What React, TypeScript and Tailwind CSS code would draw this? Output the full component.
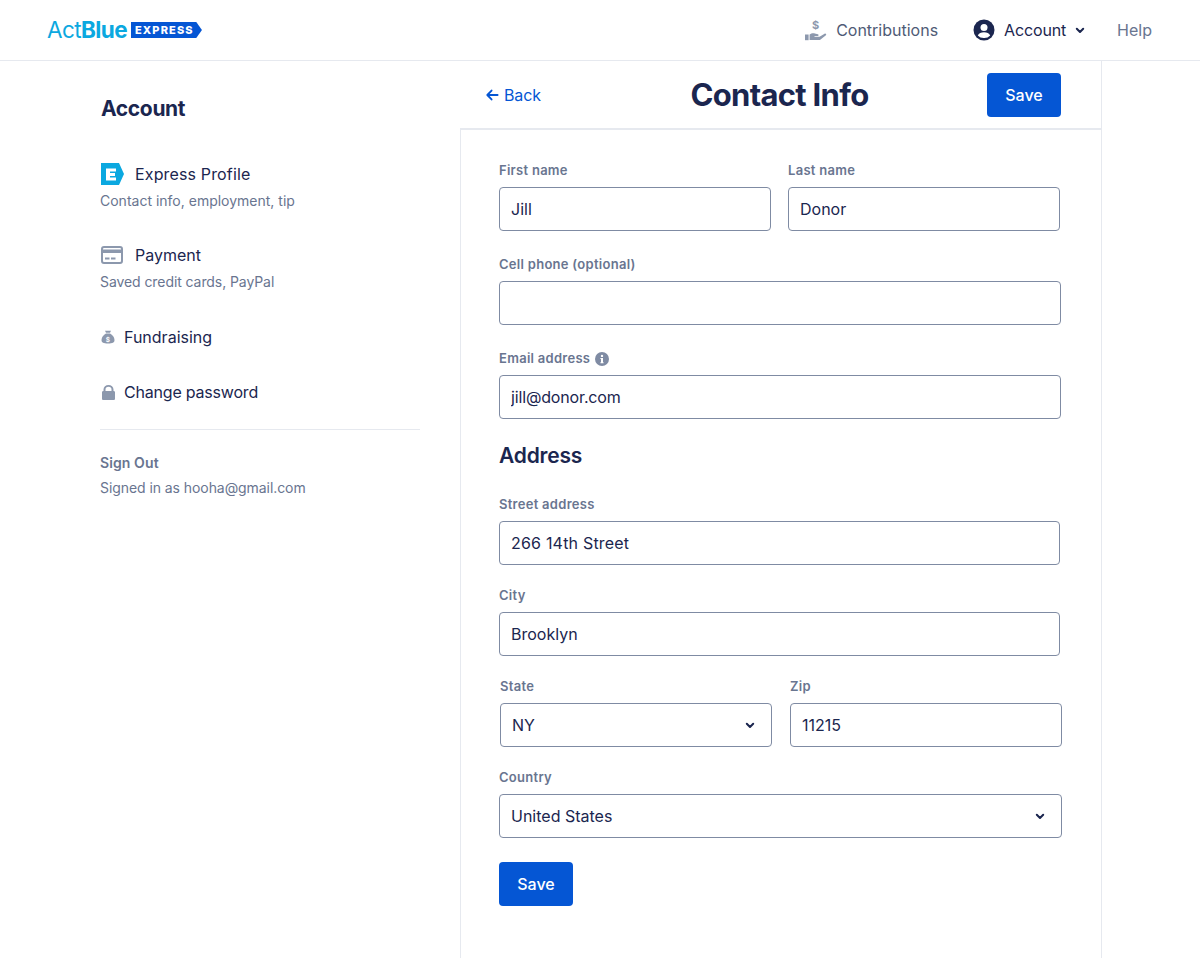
import React from "react";

const Chevron = ({ className = "" }: { className?: string }) => (
  <svg viewBox="0 0 10 7" className={className} fill="none" stroke="currentColor" strokeWidth="2" strokeLinecap="round" strokeLinejoin="round">
    <path d="M1.800 1.800 5 5l3.200-3.200" />
  </svg>
);

const Label = ({ children, className = "" }: { children: React.ReactNode; className?: string }) => (
  <div className={`h-[17px] mb-[8px] text-[13px] leading-[17px] font-semibold tracking-[0.28px] text-[#697590] ${className}`}>{children}</div>
);

const inputCls =
  "block w-full h-[44px] rounded-[4px] border border-[#7f8ba3] bg-white px-[11px] text-[16px] text-[#1b264f] outline-none";

const Field = ({ label, value = "", className = "", inputClass = "" }: { label: React.ReactNode; value?: string; className?: string; inputClass?: string }) => (
  <div className={className}>
    <Label>{label}</Label>
    <input readOnly value={value} className={`${inputCls} ${inputClass}`} />
  </div>
);

const SelectField = ({ label, value, className = "" }: { label: string; value: string; className?: string }) => (
  <div className={className}>
    <Label>{label}</Label>
    <div className="relative">
      <div className={`${inputCls} flex items-center`}>{value}</div>
      <Chevron className="absolute right-[17px] top-[19px] w-[10px] h-[7px] text-[#1b264f]" />
    </div>
  </div>
);

const SaveButton = ({ className = "" }: { className?: string }) => (
  <button className={`h-[44px] w-[74px] rounded-[4px] bg-[#0556d4] text-white text-[16px] font-medium ${className}`}>Save</button>
);

export default function App() {
  return (
    <div className="min-h-[958px] bg-white font-['Inter',sans-serif] text-[#1b264f] overflow-hidden">
      <header className="h-[61px] border-b border-[#e6e9ef] flex items-center justify-between pl-[47px] pr-[48px]">
        <div className="flex items-center">
          <span className="text-[22.500px] leading-[24px] tracking-[-0.6px] text-[#0ba8e0] font-normal">Act</span>
          <span className="text-[22.500px] leading-[24px] tracking-[-0.6px] text-[#0ba8e0] font-bold">Blue</span>
          <span className="ml-[4px] w-[71px] h-[16px] bg-[#0556d4] text-white text-[11px] leading-[16px] font-extrabold tracking-[1.15px] pl-[4px] [clip-path:polygon(0_0,92%_0,100%_50%,92%_100%,0_100%)]">
            EXPRESS
          </span>
        </div>
        <nav className="flex items-center text-[16px]">
          <svg viewBox="0 0 22 22" className="w-[22px] h-[22px] text-[#8c98ad]" fill="currentColor">
            <path d="M0 15.500h3.600v5.700H0z" />
            <path d="M4.600 15.600c1.500-1.200 3.400-1.700 5.200-1.200l3.200.8c.9.3.8 1.700-.3 1.700H9.500v.8h5l5.100-3c1-.5 2.200.7 1.300 1.600l-5.300 4.200c-.5.4-1 .6-1.700.6H4.600z" />
            <text x="10.500" y="10" fontSize="11" fontWeight="700" textAnchor="middle" fontFamily="Inter, sans-serif">$</text>
          </svg>
          <span className="ml-[9px] text-[#4f5b76]">Contributions</span>
          <svg viewBox="0 0 22 22" className="ml-[35px] w-[22px] h-[22px] text-[#1b264f]">
            <circle cx="11" cy="11" r="10.500" fill="currentColor" />
            <circle cx="11" cy="8.400" r="3.500" fill="#fff" />
            <path d="M4.800 16.400c1-2.200 3.300-3.200 6.200-3.200s5.200 1 6.200 3.200A8 8 0 0 1 11 19a8 8 0 0 1-6.200-2.600z" fill="#fff" />
          </svg>
          <span className="ml-[9px] w-[64px] tracking-[-0.15px] text-[#1b264f]">Account</span>
          <Chevron className="ml-[7px] w-[10px] h-[7px] text-[#1b264f]" />
          <span className="ml-[32px] text-[#697590]">Help</span>
        </nav>
      </header>

      <div className="flex">
        <aside className="ml-[100px] w-[320px] shrink-0">
          <h2 className="mt-[36px] ml-[1px] text-[21px] leading-[24px] font-bold tracking-[-0.35px]">Account</h2>

          <div className="mt-[41px] flex items-center h-[24px]">
            <svg viewBox="0 0 24 22" className="ml-[1px] w-[24px] h-[22px]">
              <path d="M0 0h18l5 11-5 11H0z" fill="#0ba8e0" />
              <path d="M5 5.500h10v3H9V10h5v3H9v1.500h6v3H5z" fill="#fff" />
            </svg>
            <span className="ml-[10px] text-[16px] tracking-[0.15px]">Express Profile</span>
          </div>
          <p className="mt-[6px] text-[14px] leading-[18px] text-[#697590]">Contact info, employment, tip</p>

          <div className="mt-[33px] flex items-center h-[24px]">
            <svg viewBox="0 0 22 18" className="ml-[1px] w-[22px] h-[18px]" fill="none">
              <rect x="1" y="1" width="20" height="16" rx="2" stroke="#8c98ad" strokeWidth="2" />
              <rect x="1" y="3.500" width="20" height="3.500" fill="#8c98ad" />
              <rect x="4" y="11.500" width="4.500" height="2" fill="#8c98ad" />
              <rect x="10" y="11.500" width="4.500" height="2" fill="#8c98ad" />
            </svg>
            <span className="ml-[12px] text-[16px]">Payment</span>
          </div>
          <p className="mt-[6px] text-[14px] leading-[18px] tracking-[-0.08px] text-[#697590]">Saved credit cards, PayPal</p>

          <div className="mt-[34px] flex items-center h-[24px]">
            <svg viewBox="0 0 14 14" className="ml-[1px] w-[14px] h-[14px]" fill="#8c98ad">
              <path d="M4 .8h6l-1 2H5z" />
              <path d="M5 3.600h4c2.500 1.500 4.500 4 4.500 6.400 0 2.600-2 3.500-6.500 3.500S.5 12.600.5 10C.5 7.600 2.500 5.100 5 3.600z" />
              <text x="7" y="11.500" fontSize="6.500" fontWeight="700" textAnchor="middle" fill="#fff" fontFamily="Inter, sans-serif">$</text>
            </svg>
            <span className="ml-[9px] text-[16px]">Fundraising</span>
          </div>

          <div className="mt-[31px] flex items-center h-[24px]">
            <svg viewBox="0 0 13 15" className="ml-[2px] w-[13px] h-[15px]" fill="#8c98ad">
              <path d="M1.500 6V4.500a5 4.500 0 0 1 10 0V6h.2c.7 0 1.300.6 1.300 1.300v6.400c0 .7-.6 1.300-1.300 1.300H1.300C.6 15 0 14.400 0 13.700V7.300C0 6.600.6 6 1.300 6zm2 0h6V4.500a3 2.700 0 0 0-6 0z" />
            </svg>
            <span className="ml-[9px] text-[16px] tracking-[-0.2px]">Change password</span>
          </div>

          <div className="mt-[25px] h-px bg-[#e6e9ef]" />
          <div className="mt-[24px] text-[14px] leading-[18px] font-semibold tracking-[0.1px] text-[#697590]">Sign Out</div>
          <p className="mt-[7px] text-[14px] leading-[18px] tracking-[-0.07px] text-[#697590]">Signed in as hooha@gmail.com</p>
        </aside>

        <main className="ml-[40px] w-[642px] shrink-0 min-h-[897px] border-r border-[#e6e9ef]">
          <div className="relative h-[69px] border-b-2 border-[#e6e9ef] flex items-center justify-between pl-[26px] pr-[40px]">
            <div className="flex items-center text-[16px] text-[#0556d4] mt-[1px]">
              <svg viewBox="0 0 14 12" className="w-[13px] h-[12px]" fill="none" stroke="currentColor" strokeWidth="2" strokeLinecap="round" strokeLinejoin="round">
                <path d="M6 1.200 1.400 6 6 10.800M2 6h10.500" />
              </svg>
              <span className="ml-[5px] tracking-[-0.1px]">Back</span>
            </div>
            <h1 className="absolute left-0 right-[2px] top-[14px] text-center text-[31px] leading-[40px] font-bold tracking-[-0.7px]">Contact Info</h1>
            <SaveButton className="relative mt-[1px]" />
          </div>

          <div className="border-l border-[#e6e9ef] pl-[38px] pr-[30px] pt-[32px] min-h-[828px]">
            <div className="flex gap-[17px]">
              <Field label="First name" value="Jill" className="w-[272px] shrink-0" />
              <Field label="Last name" value="Donor" className="w-[272px] shrink-0" />
            </div>
            <Field label="Cell phone (optional)" className="mt-[25px] w-[562px]" />
            <Field
              label={
                <span className="flex items-center">
                  Email address
                  <svg viewBox="0 0 14 14" className="ml-[5px] w-[14px] h-[14px]">
                    <circle cx="7" cy="7" r="7" fill="#7f8ba3" />
                    <rect x="6" y="6" width="2" height="5" fill="#fff" />
                    <path d="M5.400 6h2.600v1H5.400zM5.400 10.200h3.200v1H5.400z" fill="#fff" />
                    <circle cx="7" cy="3.900" r="1.200" fill="#fff" />
                  </svg>
                </span>
              }
              value="jill@donor.com"
              className="mt-[25px] w-[562px]"
              inputClass="tracking-[-0.15px]"
            />
            <h3 className="mt-[23px] text-[21px] leading-[28px] font-semibold tracking-[-0.2px]">Address</h3>
            <Field label="Street address" value="266 14th Street" className="mt-[26px] w-[561px]" inputClass="tracking-[0.2px]" />
            <Field label="City" value="Brooklyn" className="mt-[22px] w-[561px]" />
            <div className="mt-[22px] ml-[1px] flex gap-[18px]">
              <SelectField label="State" value="NY" className="w-[272px] shrink-0" />
              <Field label="Zip" value="11215" className="w-[272px] shrink-0" />
            </div>
            <SelectField label="Country" value="United States" className="mt-[22px] w-[563px]" />
            <SaveButton className="mt-[24px] block" />
          </div>
        </main>
      </div>
    </div>
  );
}
